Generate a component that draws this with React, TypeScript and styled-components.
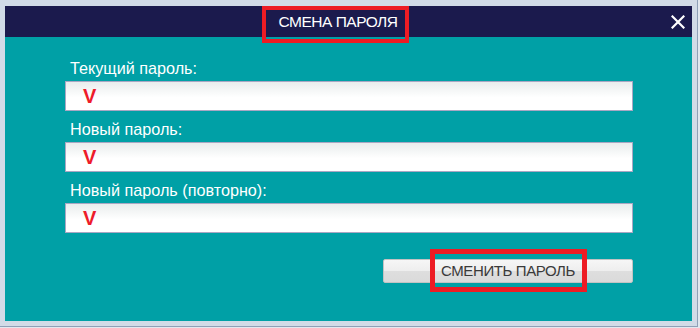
import styled, { createGlobalStyle } from 'styled-components';

const GlobalStyle = createGlobalStyle`
  html, body {
    margin: 0;
    padding: 0;
    background: #e3e8ef;
  }
  * {
    box-sizing: border-box;
  }
`;

const Screen = styled.div`
  width: 700px;
  height: 328px;
  background: #e3e8ef;
`;

const Frame = styled.div`
  width: 698px;
  height: 327px;
  padding: 6px 5px 5px 5px;
  background: #d2dbe7;
  border-right: 1px solid #8fa0b7;
  border-bottom: 1px solid #8fa0b7;
`;

const Dialog = styled.div`
  height: 100%;
  display: flex;
  flex-direction: column;
  font-family: "Liberation Sans", Arial, sans-serif;
`;

const TitleBar = styled.div`
  height: 31px;
  flex-shrink: 0;
  display: flex;
  align-items: center;
  padding-right: 7px;
  background: #1b1a4d;
  position: relative;
  z-index: 1;
`;

const TitleSlot = styled.div`
  flex: 1;
  display: flex;
  justify-content: center;
`;

const Title = styled.span`
  position: relative;
  line-height: 31px;
  font-size: 15.5px;
  letter-spacing: -0.5px;
  color: #ffffff;

  &::after {
    content: '';
    position: absolute;
    top: 0;
    bottom: -6px;
    left: -17px;
    right: -12px;
    border: 4px solid #ed1c24;
  }
`;

const CloseButton = styled.button`
  width: 14px;
  height: 14px;
  padding: 0;
  border: none;
  background: none;
  display: flex;
  cursor: pointer;
`;

const Body = styled.div`
  flex: 1;
  background: #00a0a6;
  padding: 22px 59px 0 60px;
`;

const Form = styled.div`
  display: flex;
  flex-direction: column;
  gap: 9px;
`;

const Field = styled.div`
  display: flex;
  flex-direction: column;
`;

const Label = styled.label`
  line-height: 18px;
  margin-bottom: 4px;
  padding-left: 5px;
  font-size: 16.2px;
  color: #ffffff;
`;

const InputBox = styled.div`
  height: 30px;
  display: flex;
  align-items: center;
  padding-left: 17px;
  border: 1px solid #a9a7c3;
  background: linear-gradient(#e9eded 0%, #ffffff 55%, #ffffff 100%);
`;

const Mark = styled.span`
  font-size: 20px;
  font-weight: bold;
  color: #ee1b2a;
  line-height: 1;
`;

const Actions = styled.div`
  display: flex;
  justify-content: flex-end;
  margin-top: 26px;
`;

const SubmitButton = styled.button`
  width: 250px;
  height: 24px;
  padding: 0;
  border: 1px solid #c3c3c3;
  border-radius: 2px;
  background: linear-gradient(#f6f6f6 0%, #eeeeee 48%, #dedede 52%, #dadada 100%);
  display: flex;
  justify-content: center;
  align-items: center;
  font-family: "Liberation Sans", Arial, sans-serif;
  cursor: pointer;
`;

const ButtonLabel = styled.span`
  position: relative;
  line-height: 22px;
  font-size: 15px;
  letter-spacing: -0.4px;
  color: #3a3a3a;

  &::after {
    content: '';
    position: absolute;
    top: -11px;
    bottom: -10px;
    left: -11px;
    right: -12px;
    border: 5px solid #ed1c24;
  }
`;

const fields = ['Текущий пароль:', 'Новый пароль:', 'Новый пароль (повторно):'];

const App: React.FC = () => {
  return (
    <Screen>
      <GlobalStyle />
      <Frame>
        <Dialog>
          <TitleBar>
            <TitleSlot>
              <Title>СМЕНА ПАРОЛЯ</Title>
            </TitleSlot>
            <CloseButton aria-label="Закрыть">
              <svg width="14" height="14" viewBox="0 0 14 14">
                <path d="M1.5 1.5 L12.5 12.5 M12.5 1.5 L1.5 12.5" stroke="#ffffff" strokeWidth="2.2" strokeLinecap="square" />
              </svg>
            </CloseButton>
          </TitleBar>
          <Body>
            <Form>
              {fields.map((label) => (
                <Field key={label}>
                  <Label>{label}</Label>
                  <InputBox>
                    <Mark>V</Mark>
                  </InputBox>
                </Field>
              ))}
            </Form>
            <Actions>
              <SubmitButton>
                <ButtonLabel>СМЕНИТЬ ПАРОЛЬ</ButtonLabel>
              </SubmitButton>
            </Actions>
          </Body>
        </Dialog>
      </Frame>
    </Screen>
  );
};

export default App;
